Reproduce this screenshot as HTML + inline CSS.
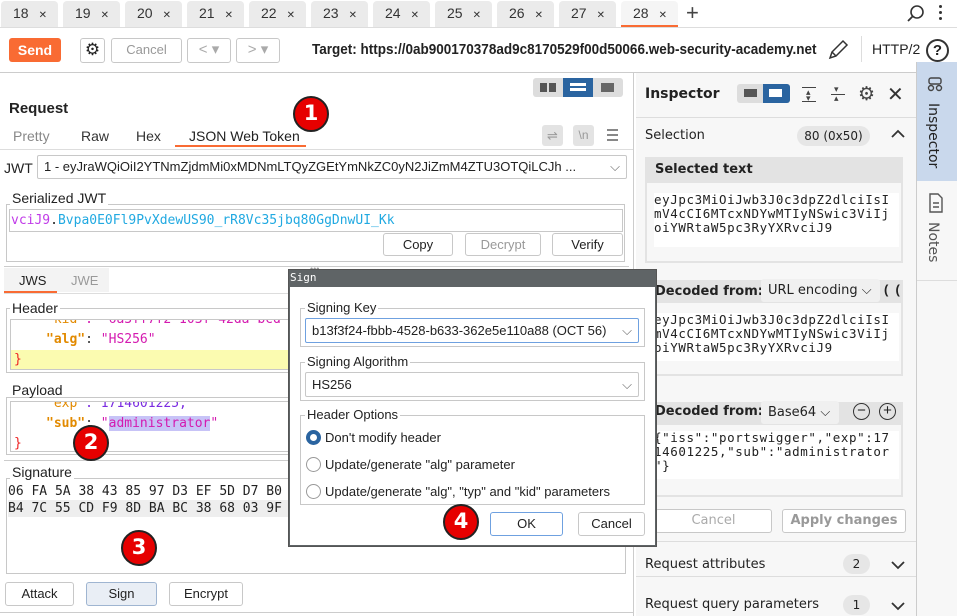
<!DOCTYPE html>
<html><head><meta charset="utf-8"><style>
*{box-sizing:border-box;margin:0;padding:0}
body{width:957px;height:616px;overflow:hidden;background:#fff;font-family:"Liberation Sans","DejaVu Sans",sans-serif;font-size:13px;color:#222;position:relative}
.a{position:absolute}
.tab{position:absolute;top:1px;height:26px;background:#ebebeb;border-radius:4px 4px 0 0;font-size:14px;line-height:24px;padding-left:12px;color:#333}
.tab span{font-size:10px;margin-left:10px}
.btn{position:absolute;border:1px solid #c8c8c8;border-radius:3px;background:#fff;text-align:center;font-size:13px;line-height:22px}
.fs{position:absolute;border:1px solid #c8c8c8}
.lg{position:absolute;background:inherit;padding:0 2px;font-size:13px;line-height:14px}
.mono{font-family:"DejaVu Sans Mono","Liberation Mono",monospace}
.circ{position:absolute;width:36px;height:36px;border-radius:50%;background:#e60000;border:2px solid #222;color:#fff;font-weight:bold;font-size:21px;text-align:center;line-height:31px;font-family:"DejaVu Sans",sans-serif}
.ins{font-family:"DejaVu Sans",sans-serif}
.rad{position:absolute;left:306px;width:15px;height:15px;border-radius:50%;border:1px solid #999;background:#fff}
</style></head><body>
<div class="tab" style="left:1px;width:57px">18<span>✕</span></div>
<div class="tab" style="left:63px;width:57px">19<span>✕</span></div>
<div class="tab" style="left:125px;width:57px">20<span>✕</span></div>
<div class="tab" style="left:187px;width:57px">21<span>✕</span></div>
<div class="tab" style="left:249px;width:57px">22<span>✕</span></div>
<div class="tab" style="left:311px;width:57px">23<span>✕</span></div>
<div class="tab" style="left:373px;width:57px">24<span>✕</span></div>
<div class="tab" style="left:435px;width:57px">25<span>✕</span></div>
<div class="tab" style="left:497px;width:57px">26<span>✕</span></div>
<div class="tab" style="left:559px;width:57px">27<span>✕</span></div>
<div class="tab" style="left:621px;width:57px;background:#f5f5f5;border-bottom:2px solid #f96b33">28<span>✕</span></div>
<div class="a" style="left:686px;top:0;font-size:22px;line-height:26px;color:#444">+</div>
<svg class="a" style="left:906px;top:4px" width="20" height="20"><circle cx="11" cy="8" r="6" fill="none" stroke="#333" stroke-width="1.6"/><line x1="7" y1="12" x2="2" y2="17" stroke="#333" stroke-width="1.8"/></svg>
<div class="a" style="left:939px;top:5px;width:3px;height:3px;background:#333;border-radius:50%;box-shadow:0 6px #333,0 12px #333"></div>
<div class="a" style="left:0;top:27px;width:957px;height:1px;background:#ddd"></div>
<div class="a" style="left:9px;top:38px;width:52px;height:24px;background:#f96b33;border-radius:3px;color:#fff;font-weight:bold;font-size:14px;text-align:center;line-height:24px">Send</div>
<div class="btn" style="left:80px;top:38px;width:25px;height:25px;font-size:17px;line-height:22px">⚙</div>
<div class="btn" style="left:111px;top:38px;width:71px;height:25px;color:#999">Cancel</div>
<div class="btn" style="left:187px;top:38px;width:44px;height:25px;color:#aaa;font-size:15px">&lt; ▾</div>
<div class="btn" style="left:236px;top:38px;width:44px;height:25px;color:#aaa;font-size:15px">&gt; ▾</div>
<div class="a" style="left:312px;top:40px;font-weight:bold;font-size:15px;line-height:20px;color:#222;white-space:nowrap;transform:scaleX(0.9);transform-origin:0 0">Target: https://0ab900170378ad9c8170529f00d50066.web-security-academy.net</div>
<svg class="a" style="left:826px;top:38px" width="24" height="24"><path d="M4 20 L6 14 L17 3 L21 7 L10 18 Z M6 14 L10 18" fill="none" stroke="#333" stroke-width="1.5"/></svg>
<div class="a" style="left:861px;top:36px;width:1px;height:26px;background:#ddd"></div>
<div class="a" style="left:872px;top:41px;font-size:14px">HTTP/2</div>
<div class="a" style="left:926px;top:39px;width:23px;height:23px;border:2px solid #333;border-radius:50%;text-align:center;font-size:15px;line-height:19px;font-weight:bold">?</div>
<div class="a" style="left:0;top:72px;width:957px;height:1px;background:#ccc"></div>
<div class="a" style="left:533px;top:78px;width:90px;height:19px;background:#ddd;border-radius:3px"></div>
<div class="a" style="left:563px;top:78px;width:30px;height:19px;background:#2a64a0"></div>
<div class="a" style="left:540px;top:83px;width:7px;height:9px;background:#555;box-shadow:9px 0 #555"></div>
<div class="a" style="left:570px;top:83px;width:16px;height:3px;background:#fff;box-shadow:0 5px #fff"></div>
<div class="a" style="left:601px;top:83px;width:13px;height:9px;background:#666"></div>
<div class="a" style="left:9px;top:100px;font-weight:bold;font-size:15px">Request</div>
<div class="a" style="left:13px;top:128px;font-size:14px;color:#888">Pretty</div>
<div class="a" style="left:81px;top:128px;font-size:14px;color:#333">Raw</div>
<div class="a" style="left:136px;top:128px;font-size:14px;color:#333">Hex</div>
<div class="a" style="left:189px;top:128px;font-size:14px;color:#222">JSON Web Token</div>
<div class="a" style="left:175px;top:145px;width:131px;height:2px;background:#f96b33"></div>
<div class="a" style="left:542px;top:125px;width:21px;height:21px;background:#e3e3e3;border-radius:3px;color:#999;text-align:center;font-size:13px;line-height:21px">⇌</div>
<div class="a" style="left:573px;top:125px;width:21px;height:21px;background:#e3e3e3;border-radius:3px;color:#999;text-align:center;font-size:12px;line-height:21px">\n</div>
<div class="a" style="left:607px;top:129px;width:11px;height:2px;background:#888;box-shadow:0 5px #888,0 10px #888"></div>
<div class="a" style="left:0;top:149px;width:633px;height:1px;background:#ddd"></div>
<div class="a" style="left:4px;top:160px;font-size:14px">JWT</div>
<div class="a" style="left:37px;top:155px;width:590px;height:24px;border:1px solid #c8c8c8;border-radius:2px;font-size:13px;line-height:22px;padding-left:6px;white-space:nowrap;overflow:hidden">1 - eyJraWQiOiI2YTNmZjdmMi0xMDNmLTQyZGEtYmNkZC0yN2JiZmM4ZTU3OTQiLCJh ...<span style="position:absolute;right:6px;top:0;color:#666">⌵</span></div>
<div class="fs" style="left:6px;top:204px;width:619px;height:58px"></div>
<div class="lg" style="left:10px;top:191px;background:#fff;font-size:14px">Serialized JWT</div>
<div class="a mono" style="left:9px;top:209px;width:614px;height:23px;border:1px solid #c8c8c8;background:#fff;font-size:13px;line-height:21px;padding-left:1px"><span style="color:#c03ae8">vciJ9</span>.<span style="color:#21a9e1">Bvpa0E0Fl9PvXdewUS90_rR8Vc35jbq80GgDnwUI_Kk</span></div>
<div class="btn" style="left:383px;top:233px;width:70px;height:23px">Copy</div>
<div class="btn" style="left:465px;top:233px;width:76px;height:23px;color:#999">Decrypt</div>
<div class="btn" style="left:552px;top:233px;width:71px;height:23px">Verify</div>
<div class="a" style="left:4px;top:266px;width:625px;height:1px;background:#ccc"></div>
<div class="a" style="left:310px;top:264px;font-size:9px;color:#999">•••</div>
<div class="a" style="left:4px;top:268px;width:105px;height:24px;background:#f3f3f3"></div>
<div class="a" style="left:19px;top:273px;font-size:13px">JWS</div>
<div class="a" style="left:71px;top:273px;font-size:13px;color:#999">JWE</div>
<div class="a" style="left:4px;top:291px;width:53px;height:2px;background:#f96b33"></div>
<div class="a" style="left:4px;top:293px;width:625px;height:1px;background:#ddd"></div>
<div class="fs" style="left:6px;top:308px;width:300px;height:65px"></div>
<div class="lg" style="left:10px;top:301px;background:#fff;font-size:14px">Header</div>
<div class="a mono" style="left:10px;top:319px;width:296px;height:51px;border:1px solid #c8c8c8;overflow:hidden;font-size:13px;line-height:20px;background:#fff">
<div style="margin-top:-10px;padding-left:35px;color:#d41ab0"><span style="color:#e28a00">"kid"</span>: "6a3ff7f2-103f-42da-bcd</div>
<div style="padding-left:35px;color:#d41ab0"><b style="color:#e28a00;font-weight:bold">"alg"</b><span style="color:#333">: </span>"HS256"</div>
<div style="background:#fbfbb0;color:#e22;padding-left:3px">}</div></div>
<div class="fs" style="left:6px;top:397px;width:300px;height:58px"></div>
<div class="lg" style="left:10px;top:383px;background:#fff;font-size:14px">Payload</div>
<div class="a mono" style="left:10px;top:401px;width:296px;height:51px;border:1px solid #c8c8c8;overflow:hidden;font-size:13px;line-height:20px;background:#fff">
<div style="margin-top:-8px;padding-left:35px;color:#7a2be0"><span style="color:#e28a00">"exp"</span>: 1714601225,</div>
<div style="padding-left:35px;color:#d41ab0"><b style="color:#e28a00">"sub"</b><span style="color:#333">: </span>"<span style="background:#c7c3f7">administrator</span>"</div>
<div style="color:#e22;padding-left:3px">}</div></div>
<div class="a" style="left:4px;top:460px;width:300px;height:1px;background:#ccc"></div>
<div class="fs" style="left:6px;top:478px;width:620px;height:96px"></div>
<div class="lg" style="left:10px;top:465px;background:#fff;font-size:14px">Signature</div>
<div class="a mono" style="left:8px;top:483px;width:290px;font-size:13px;line-height:17px;white-space:pre;overflow:hidden"><div>06 FA 5A 38 43 85 97 D3 EF 5D D7 B0</div><div style="background:#eee">B4 7C 55 CD F9 8D BA BC 38 68 03 9F</div></div>
<div class="btn" style="left:5px;top:582px;width:69px;height:24px">Attack</div>
<div class="btn" style="left:86px;top:582px;width:71px;height:24px;background:#e9eef5;border-color:#9fb5d1">Sign</div>
<div class="btn" style="left:169px;top:582px;width:74px;height:24px">Encrypt</div>
<div class="a" style="left:0;top:612px;width:633px;height:1px;background:#ccc"></div>
<div class="a" style="left:633px;top:73px;width:1px;height:543px;background:#ccc"></div>
<div class="a ins" style="left:636px;top:73px;width:280px;height:543px;background:#f7f7f7"></div>
<div class="a ins" style="left:645px;top:86px;font-weight:bold;font-size:14px">Inspector</div>
<div class="a" style="left:737px;top:84px;width:53px;height:19px;background:#ddd;border-radius:3px"></div>
<div class="a" style="left:763px;top:84px;width:27px;height:19px;background:#2a64a0;border-radius:0 3px 3px 0"></div>
<div class="a" style="left:744px;top:89px;width:13px;height:8px;background:#555"></div>
<div class="a" style="left:769px;top:89px;width:13px;height:8px;background:#fff"></div>
<div class="a" style="left:802px;top:87px;width:14px;height:1px;background:#444;box-shadow:0 14px #444"></div>
<div class="a" style="left:806px;top:89px;font-size:9px;line-height:6px;color:#444">▴<br>▾</div>
<div class="a" style="left:831px;top:94px;width:14px;height:1px;background:#444"></div>
<div class="a" style="left:834px;top:85px;font-size:9px;line-height:9px;color:#444">▾<br>▴</div>
<div class="a" style="left:858px;top:83px;font-size:19px;color:#444">⚙</div>
<div class="a" style="left:887px;top:82px;font-size:20px;color:#333">✕</div>
<div class="a" style="left:636px;top:117px;width:280px;height:1px;background:#ddd"></div>
<div class="a ins" style="left:645px;top:128px;font-size:13px">Selection</div>
<div class="a ins" style="left:797px;top:126px;width:73px;height:20px;background:#e6e6e6;border-radius:10px;text-align:center;font-size:12px;line-height:20px">80 (0x50)</div>
<svg class="a" style="left:890px;top:128px" width="16" height="12"><path d="M2 9 L8 3 L14 9" fill="none" stroke="#333" stroke-width="1.8"/></svg>
<div class="a" style="left:645px;top:157px;width:258px;height:106px;background:#e3e3e3"></div>
<div class="a ins" style="left:655px;top:162px;font-weight:bold;font-size:13px">Selected text</div>
<div class="a" style="left:647px;top:183px;width:254px;height:78px;background:#f7f7f7"></div>
<div class="a mono" style="left:654px;top:193px;width:245px;height:54px;background:#fff;font-size:12.5px;line-height:14px;letter-spacing:.6px">eyJpc3MiOiJwb3J0c3dpZ2dlciIsI<br>mV4cCI6MTcxNDYwMTIyNSwic3ViIj<br>oiYWRtaW5pc3RyYXRvciJ9</div>
<div class="a" style="left:645px;top:280px;width:258px;height:96px;background:#e3e3e3"></div>
<div class="a ins" style="left:655px;top:284px;font-weight:bold;font-size:13px">Decoded from:</div>
<div class="a ins" style="left:761px;top:279px;width:119px;height:23px;background:#f0f0f0;border-radius:3px;font-size:13px;line-height:23px;padding-left:7px">URL encoding ⌵</div>
<div class="a" style="left:884px;top:282px;font-size:13px;font-weight:bold">(&nbsp;&nbsp;(</div>
<div class="a" style="left:647px;top:303px;width:254px;height:71px;background:#f7f7f7"></div>
<div class="a mono" style="left:654px;top:313px;width:245px;height:48px;background:#fff;font-size:12.5px;line-height:14px;letter-spacing:.6px">eyJpc3MiOiJwb3J0c3dpZ2dlciIsI<br>mV4cCI6MTcxNDYwMTIyNSwic3ViIj<br>oiYWRtaW5pc3RyYXRvciJ9</div>
<div class="a" style="left:645px;top:402px;width:258px;height:95px;background:#e3e3e3"></div>
<div class="a ins" style="left:655px;top:404px;font-weight:bold;font-size:13px">Decoded from:</div>
<div class="a ins" style="left:761px;top:401px;width:78px;height:23px;background:#f0f0f0;border-radius:3px;font-size:13px;line-height:23px;padding-left:7px">Base64 ⌵</div>
<div class="a" style="left:853px;top:403px;width:17px;height:17px;border:1.5px solid #333;border-radius:50%;text-align:center;line-height:14px;font-size:15px">−</div>
<div class="a" style="left:879px;top:403px;width:17px;height:17px;border:1.5px solid #333;border-radius:50%;text-align:center;line-height:14px;font-size:15px">+</div>
<div class="a" style="left:647px;top:425px;width:254px;height:70px;background:#f7f7f7"></div>
<div class="a mono" style="left:654px;top:431px;width:245px;height:48px;background:#fff;font-size:12.5px;line-height:14px;letter-spacing:.6px">{"iss":"portswigger","exp":17<br>14601225,"sub":"administrator<br>"}</div>
<div class="btn ins" style="left:655px;top:509px;width:117px;height:24px;color:#aaa;background:#fff">Cancel</div>
<div class="btn ins" style="left:782px;top:509px;width:124px;height:24px;color:#999;font-weight:bold;background:#fff">Apply changes</div>
<div class="a" style="left:636px;top:541px;width:280px;height:1px;background:#ddd"></div>
<div class="a ins" style="left:645px;top:557px;font-size:13px">Request attributes</div>
<div class="a ins" style="left:843px;top:554px;width:27px;height:20px;background:#e6e6e6;border-radius:10px;text-align:center;font-size:12px;line-height:20px">2</div>
<svg class="a" style="left:890px;top:559px" width="16" height="12"><path d="M2 3 L8 9 L14 3" fill="none" stroke="#333" stroke-width="1.8"/></svg>
<div class="a" style="left:636px;top:576px;width:280px;height:1px;background:#ddd"></div>
<div class="a ins" style="left:645px;top:597px;font-size:13px">Request query parameters</div>
<div class="a ins" style="left:843px;top:595px;width:27px;height:20px;background:#e6e6e6;border-radius:10px;text-align:center;font-size:12px;line-height:20px">1</div>
<svg class="a" style="left:890px;top:600px" width="16" height="12"><path d="M2 3 L8 9 L14 3" fill="none" stroke="#333" stroke-width="1.8"/></svg>
<div class="a" style="left:916px;top:62px;width:1px;height:554px;background:#ccc"></div>
<div class="a" style="left:917px;top:62px;width:40px;height:554px;background:#f7f7f7"></div>
<div class="a" style="left:917px;top:62px;width:40px;height:119px;background:#c9d8ec"></div>
<svg class="a" style="left:926px;top:76px" width="18" height="16"><rect x="3" y="2" width="12" height="6" rx="2" fill="none" stroke="#444" stroke-width="1.4"/><circle cx="5" cy="12" r="2.5" fill="none" stroke="#444" stroke-width="1.4"/><circle cx="13" cy="12" r="2.5" fill="none" stroke="#444" stroke-width="1.4"/></svg>
<div class="a ins" style="left:925px;top:103px;font-size:14px;writing-mode:vertical-rl">Inspector</div>
<svg class="a" style="left:928px;top:193px" width="16" height="20"><path d="M2 1 H10 L14 5 V19 H2 Z M5 10 H11 M5 14 H11" fill="none" stroke="#555" stroke-width="1.4"/></svg>
<div class="a ins" style="left:925px;top:222px;font-size:14px;color:#555;writing-mode:vertical-rl">Notes</div>
<div class="a" style="left:917px;top:280px;width:40px;height:1px;background:#ddd"></div>
<div class="a" style="left:288px;top:269px;width:369px;height:278px;background:#5f6466;border:1px solid #555"></div>
<div class="a mono" style="left:290px;top:271px;color:#fff;font-size:11px">Sign</div>
<div class="a" style="left:290px;top:287px;width:365px;height:258px;background:#fff"></div>
<div class="fs" style="left:300px;top:308px;width:345px;height:39px"></div>
<div class="lg" style="left:305px;top:301px;background:#fff">Signing Key</div>
<div class="a" style="left:305px;top:318px;width:334px;height:25px;border:1px solid #6fa1e0;border-radius:2px;line-height:23px;padding-left:6px;font-size:13px">b13f3f24-fbbb-4528-b633-362e5e110a88 (OCT 56)<span style="position:absolute;right:6px;color:#666">⌵</span></div>
<div class="fs" style="left:300px;top:362px;width:345px;height:39px"></div>
<div class="lg" style="left:305px;top:355px;background:#fff">Signing Algorithm</div>
<div class="a" style="left:305px;top:372px;width:334px;height:25px;border:1px solid #c8c8c8;border-radius:2px;line-height:23px;padding-left:6px;font-size:13px">HS256<span style="position:absolute;right:6px;color:#666">⌵</span></div>
<div class="fs" style="left:300px;top:415px;width:345px;height:90px"></div>
<div class="lg" style="left:305px;top:408px;background:#fff">Header Options</div>
<div class="rad" style="top:430px;border:4px solid #2a64a0"></div>
<div class="a" style="left:325px;top:430px">Don't modify header</div>
<div class="rad" style="top:457px"></div>
<div class="a" style="left:325px;top:457px">Update/generate "alg" parameter</div>
<div class="rad" style="top:484px"></div>
<div class="a" style="left:325px;top:484px">Update/generate "alg", "typ" and "kid" parameters</div>
<div class="btn" style="left:490px;top:512px;width:73px;height:24px;border-color:#6fa1e0">OK</div>
<div class="btn" style="left:578px;top:512px;width:67px;height:24px">Cancel</div>
<div class="circ" style="left:293px;top:96px">1</div>
<div class="circ" style="left:73px;top:425px">2</div>
<div class="circ" style="left:121px;top:530px">3</div>
<div class="circ" style="left:443px;top:504px">4</div>
</body></html>
